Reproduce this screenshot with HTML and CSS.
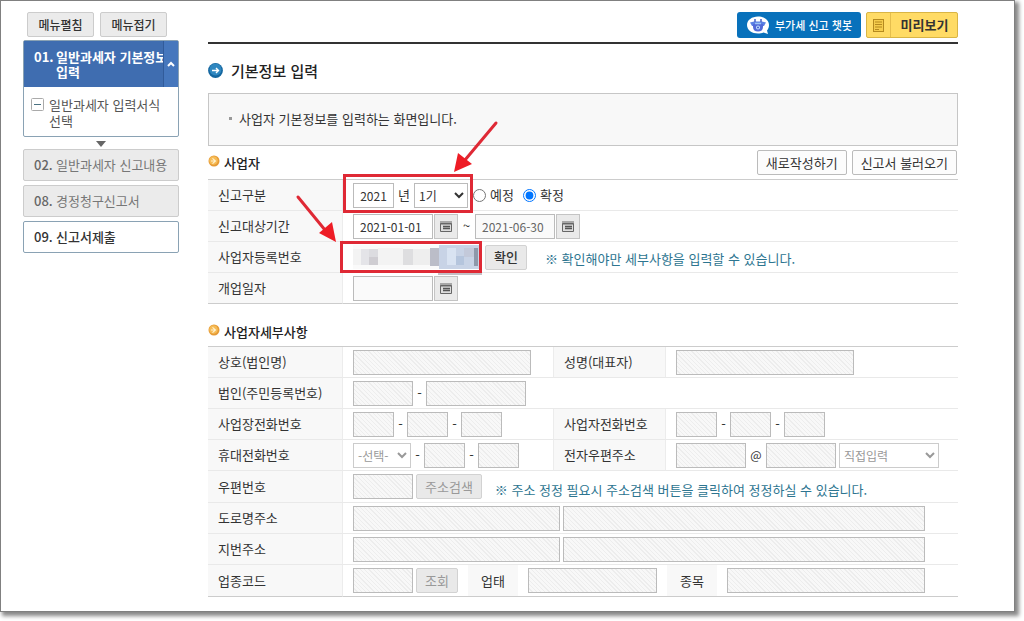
FILE: index.html
```html
<!DOCTYPE html>
<html lang="ko">
<head>
<meta charset="utf-8">
<title>기본정보 입력</title>
<link rel="stylesheet" href="styles.css">
</head>
<body>
<svg class="defs" aria-hidden="true">
  <symbol id="cal" viewBox="0 0 12 11"><path d="M0.5 2.5H11.500V10.500H0.500Z" fill="#ddd" stroke="#666"/><path d="M0 1H12M0 3H12" stroke="#666" stroke-width="1"/><path d="M3 5.500H10M3 7.500H10" stroke="#555" stroke-width="1.500"/></symbol>
  <symbol id="bullet" viewBox="0 0 12 12"><circle cx="6" cy="6" r="5.500" fill="#e59a35"/><circle cx="5.500" cy="5.500" r="4.300" fill="#f6bb55"/><path d="M4.500 3.300L7.500 6L4.500 8.700M3 6H7" fill="none" stroke="#fff2d0" stroke-width="1.100"/></symbol>
</svg>
<div class="window">
  <nav class="side">
    <div class="fold">
      <button class="btn-fold" type="button">메뉴펼침</button>
      <button class="btn-fold" type="button">메뉴접기</button>
    </div>
    <div class="group">
      <button class="group-head" type="button">
        <span class="num">01.</span><span class="group-name">일반과세자 기본정보 입력</span>
        <span class="group-toggle"><svg width="8" height="6" viewBox="0 0 8 6"><path d="M1 5L4 2L7 5" fill="none" stroke="#fff" stroke-width="2"/></svg></span>
      </button>
      <a class="sub" href="#form">
        <svg class="minus" width="13" height="13" viewBox="0 0 13 13"><rect x=".5" y=".5" width="12" height="12" rx="1" fill="#fff" stroke="#aaa"/><path d="M3 6.500H10" stroke="#4b7282"/></svg>
        <span>일반과세자 입력서식 선택</span>
      </a>
    </div>
    <svg class="down" width="10" height="6" viewBox="0 0 10 6"><path d="M0 0H10L5 6Z" fill="#666"/></svg>
    <a class="step" href="#s02"><b>02.</b><span>일반과세자 신고내용</span></a>
    <a class="step" href="#s08"><b>08.</b><span>경정청구신고서</span></a>
    <a class="step step-open" href="#s09"><b>09.</b><span>신고서제출</span></a>
  </nav>

  <main class="main" id="form">
    <div class="topbar">
      <button class="btn-chat" type="button">
        <svg width="24" height="19" viewBox="0 0 24 19"><path d="M12 0.500C18 .5 23 4 23 9C23 11.500 22 13.500 21 14.500L22 18L17.500 16.500C16 17.300 14 17.500 12 17.500C6 17.500 1 14 1 9C1 4 6 .5 12 .5Z" fill="#fff"/><path d="M4 6.500L8 5.500H16L20 6.500L18 10H6Z" fill="#5a80e4"/><path d="M7 8H17V11C17 14 15 15.500 12 15.500S7 14 7 11Z" fill="#5269d8"/><path d="M9 3V6M15 3V6" stroke="#4a63c8" stroke-width="1.500"/><path d="M9 7.500H15" stroke="#9cc4f5" stroke-width="1.500"/><circle cx="12" cy="11.500" r="2" fill="#c6e3ff"/><circle cx="12" cy="11.500" r="1" fill="#4058c8"/></svg>
        부가세 신고 챗봇
      </button>
      <button class="btn-preview" type="button">
        <span class="preview-icon"><svg width="11" height="13" viewBox="0 0 11 13"><rect x=".5" y=".5" width="10" height="12" fill="#f5cc4d" stroke="#b58a1f"/><path d="M2 3H9M2 5.500H9M2 8H9M2 10.500H6" stroke="#b58a1f"/></svg></span>
        <span class="preview-text">미리보기</span>
      </button>
    </div>

    <h1 class="title"><svg width="15" height="15" viewBox="0 0 15 15"><circle cx="7.500" cy="7.500" r="7.400" fill="#14669f"/><circle cx="7.500" cy="6.500" r="6" fill="#2f87c0"/><path d="M4 7.500H10.500M8 5L10.500 7.500L8 10" fill="none" stroke="#fff" stroke-width="1.400"/></svg>기본정보 입력</h1>
    <p class="info">사업자 기본정보를 입력하는 화면입니다.</p>

    <div class="section">
      <h2 class="section-name"><svg width="12" height="12"><use href="#bullet"/></svg>사업자</h2>
      <div class="section-actions">
        <button class="btn-white" type="button">새로작성하기</button>
        <button class="btn-white" type="button">신고서 불러오기</button>
      </div>
    </div>
    <table class="form">
      <colgroup><col class="c-label"><col></colgroup>
      <tr><th scope="row"><label for="year">신고구분</label></th><td><div class="line">
        <input class="w41 center" id="year" value="2021"><label class="unit" for="term">년</label><select class="w54" id="term"><option>1기</option><option>2기</option></select>
        <label class="radio first"><input type="radio" name="kind">예정</label><label class="radio"><input type="radio" name="kind" checked>확정</label>
      </div></td></tr>
      <tr><th scope="row"><label for="from">신고대상기간</label></th><td><div class="line">
        <input class="w80" id="from" value="2021-01-01"><button class="btn-cal" type="button" aria-label="시작일 달력"><svg width="12" height="11"><use href="#cal"/></svg></button><span class="tilde">~</span><input class="w80 readonly" value="2021-06-30" readonly aria-label="종료일"><button class="btn-cal" type="button" aria-label="종료일 달력"><svg width="12" height="11"><use href="#cal"/></svg></button>
      </div></td></tr>
      <tr><th scope="row">사업자등록번호</th><td><div class="line">
        <svg class="mosaic" width="127" height="24" viewBox="0 0 127 24"><rect width="127" height="24" fill="#fafafa"/><path d="M0 4H8V20H0ZM25 3H50V20H25Z" fill="#f3f3f3"/><path d="M8 4H16V20H8Z" fill="#e4e4e8"/><path d="M16 4H25V12H16Z" fill="#dcdce0"/><path d="M16 12H25V20H16Z" fill="#cfcdd2"/><path d="M50 4H60V20H50Z" fill="#dedee0"/><path d="M60 4H77V20H60Z" fill="#eee"/><path d="M77 3H86V21H77Z" fill="#bbbdc8"/><path d="M86 0H127V24H86Z" fill="#c8d3e6"/><path d="M94 3H103V20H94Z" fill="#d9e3f2"/><path d="M103 11H111V20H103Z" fill="#b5c5dd"/><path d="M111 3H121V12H111Z" fill="#c3c9da"/><path d="M121 3H125V21H121Z" fill="#8e98aa"/></svg>
        <button class="btn-gray confirm" type="button">확인</button><span class="note">※ 확인해야만 세부사항을 입력할 수 있습니다.</span>
      </div></td></tr>
      <tr><th scope="row"><label for="open">개업일자</label></th><td><div class="line">
        <input class="w80 readonly" id="open"><button class="btn-cal" type="button" aria-label="개업일 달력"><svg width="12" height="11"><use href="#cal"/></svg></button>
      </div></td></tr>
    </table>

    <div class="section section-detail">
      <h2 class="section-name"><svg width="12" height="12"><use href="#bullet"/></svg>사업자세부사항</h2>
    </div>
    <table class="form">
      <colgroup><col class="c-label"><col class="c-mid"><col class="c-label2"><col></colgroup>
      <tr><th scope="row"><label for="corp">상호(법인명)</label></th><td><div class="line"><input class="w178" id="corp" disabled></div></td>
        <th scope="row"><label for="ceo">성명(대표자)</label></th><td><div class="line"><input class="w178" id="ceo" disabled></div></td></tr>
      <tr><th scope="row"><label for="rrn">법인(주민등록번호)</label></th><td colspan="3"><div class="line"><input class="w60" id="rrn" disabled><span class="dash">-</span><input class="w100" disabled aria-label="뒷자리"></div></td></tr>
      <tr><th scope="row"><label for="tel">사업장전화번호</label></th><td><div class="line"><input class="w41" id="tel" disabled><span class="dash">-</span><input class="w41" disabled aria-label="국번"><span class="dash">-</span><input class="w41" disabled aria-label="번호"></div></td>
        <th scope="row"><label for="tel2">사업자전화번호</label></th><td><div class="line"><input class="w41" id="tel2" disabled><span class="dash">-</span><input class="w41" disabled aria-label="국번"><span class="dash">-</span><input class="w41" disabled aria-label="번호"></div></td></tr>
      <tr><th scope="row"><label for="cell">휴대전화번호</label></th><td><div class="line"><select class="w58" id="cell" disabled><option>-선택-</option></select><span class="dash">-</span><input class="w41" disabled aria-label="국번"><span class="dash">-</span><input class="w41" disabled aria-label="번호"></div></td>
        <th scope="row"><label for="mail">전자우편주소</label></th><td><div class="line"><input class="w70" id="mail" disabled><span class="at">@</span><input class="w70" disabled aria-label="도메인"><select class="w100 next" disabled aria-label="도메인 선택"><option>직접입력</option></select></div></td></tr>
      <tr><th scope="row"><label for="zip">우편번호</label></th><td colspan="3"><div class="line tall"><input class="w60" id="zip" disabled><button class="btn-gray next" type="button" disabled>주소검색</button><span class="note note-zip">※ 주소 정정 필요시 주소검색 버튼을 클릭하여 정정하실 수 있습니다.</span></div></td></tr>
      <tr><th scope="row"><label for="road">도로명주소</label></th><td colspan="3"><div class="line wide"><input class="w207" id="road" disabled><input class="grow next" disabled aria-label="도로명 상세주소"></div></td></tr>
      <tr><th scope="row"><label for="lot">지번주소</label></th><td colspan="3"><div class="line wide"><input class="w207" id="lot" disabled><input class="grow next" disabled aria-label="지번 상세주소"></div></td></tr>
      <tr><th scope="row"><label for="code">업종코드</label></th><td colspan="3"><div class="line tall wide"><input class="w60" id="code" disabled><button class="btn-gray next" type="button" disabled>조회</button><label class="inner-label" for="biz">업태</label><input class="w129" id="biz" disabled><label class="inner-label" for="item">종목</label><input class="grow" id="item" disabled></div></td></tr>
    </table>
  </main>

  <svg class="marks" width="520" height="290" viewBox="0 0 520 290" aria-hidden="true">
    <path d="M438 271H482V275H438Z" fill="#c5c0c6"/>
    <g fill="none" stroke="#df2935" stroke-width="3"><rect x="344.500" y="175.500" width="127" height="36"/><rect x="341.500" y="242.500" width="139" height="29"/><path d="M496 123L465 160M298 197L325 230" stroke-linecap="round"/></g>
    <path d="M454 172L458 153L472 164ZM336 242L319 233L332 222Z" fill="#ee1c25"/>
  </svg>
</div>
</body>
</html>
```
FILE: styles.css
```css
* { box-sizing: border-box; }
body {
  margin: 0;
  background: #fff;
  color: #333;
  font: 13px/16px "Noto Sans CJK KR", sans-serif;
}
button, input, select { font: inherit; color: inherit; margin: 0; }
button { padding: 0; white-space: nowrap; }
a { color: inherit; text-decoration: none; }
svg { flex: none; }
.defs { position: absolute; width: 0; height: 0; }

.window {
  position: relative;
  display: flex;
  gap: 29px;
  margin: 0 9px 9px 0;
  padding: 11px 56px 14px 22px;
  border: 1px solid #808080;
  box-shadow: 3px 3px 4px 1px #888;
}

/* Side menu */
.side { flex: none; width: 156px; display: flex; flex-direction: column; gap: 4px; }
.fold { display: flex; gap: 6px; padding-left: 4px; }
.btn-fold {
  width: 67px;
  height: 25px;
  border: 1px solid #ccc;
  border-radius: 2px;
  background: #ebebeb;
  font-size: 12px;
  font-weight: 500;
}
.group { margin-top: -1px; border: 1px solid #8aa2b4; border-radius: 2px; }
.group-head {
  display: flex;
  width: 100%;
  height: 46px;
  padding: 8px 0 0 10px;
  border: 0;
  background: #3f6db0;
  color: #fff;
  font-weight: 700;
  line-height: 15px;
  text-align: left;
  position: relative;
}
.num { flex: none; width: 22px; }
.group-name { flex: none; width: 112px; white-space: normal; }
.group-toggle {
  position: absolute;
  top: 0;
  right: 0;
  bottom: 0;
  width: 15px;
  display: flex;
  align-items: center;
  justify-content: center;
  border-left: 1px solid #315b9a;
  background: #4677bd;
}
.sub { display: flex; gap: 5px; padding: 10px 6px 7px 7px; color: #555; line-height: 16px; }
.minus { margin-top: 1px; }
.down { align-self: center; margin-bottom: -2px; }
.step {
  display: flex;
  align-items: center;
  height: 32px;
  padding-left: 10px;
  border: 1px solid #ccc;
  border-radius: 2px;
  background: #ebebeb;
  color: #777;
  white-space: nowrap;
}
.step b { flex: none; width: 22px; font-weight: 500; color: #666; }
.step-open { border-color: #8aa2b4; background: #fff; color: #333; font-weight: 500; }
.step-open b { color: #333; }

/* Header */
.main { flex: 1; min-width: 0; }
.topbar {
  display: flex;
  justify-content: flex-end;
  gap: 5px;
  height: 32px;
  border-bottom: 2px solid #333;
}
.btn-chat {
  display: flex;
  align-items: center;
  gap: 5px;
  height: 26px;
  padding: 0 9px;
  border: 0;
  border-radius: 3px;
  background: #0871bb;
  color: #fff;
  font-size: 11px;
  font-weight: 500;
}
.btn-preview {
  display: flex;
  height: 26px;
  border: 1px solid #d9b545;
  border-radius: 2px;
  background: #ffdb65;
}
.preview-icon {
  display: flex;
  align-items: center;
  justify-content: center;
  width: 24px;
  height: 100%;
  border-right: 1px solid #e5be4e;
}
.preview-text { width: 66px; line-height: 23px; padding-left: 1px; font-weight: 700; }
.title {
  display: flex;
  align-items: center;
  gap: 8px;
  margin: 16px 0 12px;
  font-size: 15px;
  line-height: 21px;
  font-weight: 500;
  color: #222;
}
.info {
  display: flex;
  align-items: center;
  gap: 7px;
  height: 53px;
  margin: 0;
  padding: 0 0 2px 20px;
  border: 1px solid #c6c6c6;
  background: #f8f8f8;
}
.info::before { content: ""; width: 3px; height: 3px; background: #999; }
.section { display: flex; justify-content: space-between; align-items: center; height: 33px; padding-right: 1px; }
.section-detail { height: 42px; padding-top: 13px; }
.section-name {
  display: flex;
  gap: 4px;
  margin: 0;
  font-size: 13px;
  font-weight: 500;
  color: #222;
}
.section-actions { display: flex; gap: 5px; }
.btn-white {
  height: 25px;
  padding: 0 8px;
  border: 1px solid #bbb;
  border-radius: 2px;
  background: #fcfcfc;
}

/* Form tables */
.form {
  width: 100%;
  table-layout: fixed;
  border-spacing: 0;
  border-top: 1px solid #ccc;
}
.c-label { width: 135px; }
.c-mid { width: 210px; }
.c-label2 { width: 113px; }
.form th {
  padding: 0 0 0 10px;
  border-right: 1px solid #ececec;
  border-bottom: 1px solid #e9e9e9;
  background: #f8f8f8;
  font-weight: 400;
  text-align: left;
  white-space: nowrap;
}
.form td { padding: 0 0 0 10px; border-bottom: 1px solid #e9e9e9; }
.form td + th { border-left: 1px solid #ececec; }
.form tr:last-child > * { border-bottom-color: #ccc; }
.line { display: flex; align-items: center; height: 30px; white-space: nowrap; }
.tall { height: 31px; }
.wide { padding-right: 33px; }
.line > input, .line > select {
  flex: none;
  height: 25px;
  padding: 0 6px;
  border: 1px solid #bbb;
  border-radius: 0;
  background: #fff;
  font-size: 12px;
}
.line > select { padding: 0; }
.line > .readonly { background: #fafafa; color: #666; }
.line > input:disabled {
  background: repeating-linear-gradient(45deg, #f8f8f8 0, #f8f8f8 2px, #ededed 2px, #ededed 3px);
}
.line > select:disabled { color: #999; border-color: #ccc; opacity: 1; }
.line > .w41 { width: 41px; }
.line > .w54 { width: 54px; }
.line > .w58 { width: 58px; }
.line > .w60 { width: 60px; }
.line > .w70 { width: 70px; }
.line > .w80 { width: 80px; }
.line > .w100 { width: 100px; }
.line > .w129 { width: 129px; }
.line > .w178 { width: 178px; }
.line > .w207 { width: 207px; }
.line > .grow { flex: 1; min-width: 0; }
.line > .center { padding: 0; text-align: center; }
.line > .next { margin-left: 3px; }
.unit { width: 20px; text-align: center; }
.dash { width: 13px; text-align: center; }
.at { width: 20px; text-align: center; font-size: 12px; }
.tilde { width: 17px; text-align: center; }
.radio { display: flex; align-items: center; gap: 4px; margin-left: 9px; }
.first { margin-left: 5px; }
.radio input { width: 13px; height: 13px; }
.btn-cal {
  display: flex;
  align-items: center;
  justify-content: center;
  width: 24px;
  height: 25px;
  margin-left: 1px;
  border: 1px solid #c4c4c4;
  background: #eaeaea;
}
.btn-gray {
  height: 25px;
  padding: 0 8px;
  border: 1px solid #d2d2d2;
  border-radius: 2px;
  background: #e9e9e9;
}
.btn-gray:disabled { color: #999; }
.confirm { margin-left: 5px; font-weight: 500; }
.note { margin-left: 18px; padding-top: 4px; color: #2d7590; }
.note-zip { margin-left: 13px; padding-top: 6px; }
.inner-label {
  display: flex;
  align-items: center;
  justify-content: center;
  width: 50px;
  height: 100%;
  margin: 0 10px;
  background: #f8f8f8;
}

/* Highlight frames and arrows drawn over the form */
.marks { position: absolute; top: -1px; left: -1px; pointer-events: none; }
```
